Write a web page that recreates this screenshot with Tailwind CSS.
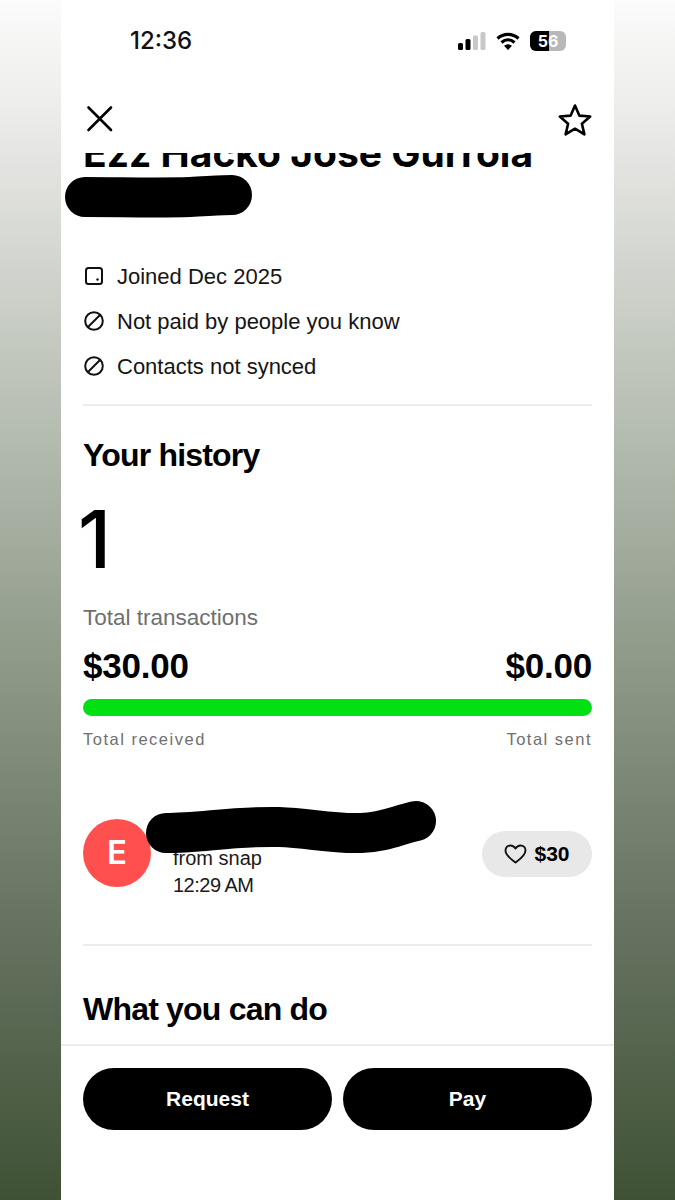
<!DOCTYPE html>
<html>
<head>
  <meta charset="UTF-8" />
  <script src="https://cdn.jsdelivr.net/npm/@tailwindcss/browser@4"></script>
  <title>Profile</title>
</head>
<body class="h-[1200px] w-[675px] overflow-hidden bg-[linear-gradient(to_bottom,#fbfbfb_0px,#eeeeec_100px,#d8dad5_230px,#b0b8ab_459px,#8a9583_689px,#677462_918px,#3f5235_1200px)] font-['Liberation_Sans',sans-serif] text-black">
  <div class="relative ml-[61px] flex h-[1200px] w-[553px] flex-col bg-white">
    <!-- status bar -->
    <div class="flex h-[100px] shrink-0 justify-between pl-[69px] pr-[48px] pt-[26px] font-['Inter',sans-serif]">
      <span class="text-[24px] font-medium leading-[30px] text-[#111]">12:36</span>
      <div class="flex h-[30px] items-center gap-[10px]">
        <svg width="28" height="18" viewBox="0 0 28 18">
          <rect x="0" y="11" width="5" height="7" rx="1.5" fill="#000"/>
          <rect x="7.5" y="7" width="5" height="11" rx="1.5" fill="#000"/>
          <rect x="15" y="3.5" width="5" height="14.5" rx="1.5" fill="#c8c8c8"/>
          <rect x="22.5" y="0" width="5" height="18" rx="1.5" fill="#c8c8c8"/>
        </svg>
        <svg width="24" height="18" viewBox="0 0 24 18" fill="none" stroke="#000" stroke-width="3.2">
          <path d="M1.5 6.5C7.5 1 16.5 1 22.5 6.5"/>
          <path d="M5.5 10.5C9.5 7 14.5 7 18.5 10.5"/>
          <path d="M12 18L8 13.8C10.5 11.8 13.5 11.8 16 13.8Z" fill="#000" stroke="none"/>
        </svg>
        <div class="relative flex h-[20px] w-[36px] overflow-hidden rounded-[6px] bg-[#b8b8b8]">
          <div class="h-full w-[19px] bg-black"></div>
          <span class="absolute inset-0 text-center text-[16px] font-bold leading-[20px] text-white">56</span>
        </div>
      </div>
    </div>

    <!-- top nav -->
    <div class="flex h-[53px] shrink-0 items-start justify-between pl-[23px] pr-[21px]">
      <svg class="mt-[3px]" width="32" height="32" viewBox="0 0 32 32" fill="none" stroke="#000" stroke-width="2.6" stroke-linecap="round">
        <path d="M4.5 4.5L27 27M27 4.5L4.5 27"/>
      </svg>
      <svg class="mt-[2px]" width="36" height="36" viewBox="0 0 36 36" fill="none" stroke="#000" stroke-width="2.6" stroke-linejoin="round">
        <path d="M18 3.5L22.3 13.6L33.2 14.5L24.9 21.7L27.4 32.4L18 26.7L8.6 32.4L11.1 21.7L2.8 14.5L13.7 13.6Z"/>
      </svg>
    </div>

    <!-- scroll area -->
    <div class="h-[891px] overflow-hidden px-[22px]">
      <h1 class="-mt-[24px] h-[47px] whitespace-nowrap font-['Inter',sans-serif] text-[39px] font-bold leading-[47px]">Ezz Hacko Jose Gurrola</h1>

      <div class="mt-[89px] flex flex-col gap-[22px] border-b-2 border-[#ececec] pb-[26px] text-[22px] leading-[23px] text-[#151515]">
        <div class="flex items-center gap-[13px] pl-[1px]">
          <svg class="-mt-[2px]" width="20" height="20" viewBox="0 0 20 20" fill="none" stroke="#111" stroke-width="2"><rect x="2" y="2" width="16" height="16" rx="2.5"/><circle cx="13.5" cy="13.5" r="1.2" fill="#111" stroke="none"/></svg>
          <span>Joined Dec 2025</span>
        </div>
        <div class="flex items-center gap-[13px] pl-[1px]">
          <svg class="-mt-[2px]" width="20" height="20" viewBox="0 0 20 20" fill="none" stroke="#111" stroke-width="2"><circle cx="10" cy="10" r="8.8"/><path d="M16 4L4 16"/></svg>
          <span>Not paid by people you know</span>
        </div>
        <div class="flex items-center gap-[13px] pl-[1px]">
          <svg class="-mt-[2px]" width="20" height="20" viewBox="0 0 20 20" fill="none" stroke="#111" stroke-width="2"><circle cx="10" cy="10" r="8.8"/><path d="M16 4L4 16"/></svg>
          <span>Contacts not synced</span>
        </div>
      </div>

      <h2 class="mt-[28px] text-[32px] font-bold leading-[42px] tracking-[-0.8px]">Your history</h2>
      <div class="-ml-[5px] mt-[21px] font-['Inter',sans-serif] text-[80px] font-medium leading-[84px]">1</div>
      <div class="mt-[23px] text-[22.5px] leading-[28px] text-[#6f6f6f]">Total transactions</div>

      <div class="mt-[14px] flex justify-between text-[35px] font-bold leading-[40px] tracking-[-0.2px]">
        <span>$30.00</span>
        <span>$0.00</span>
      </div>
      <div class="mt-[13px] h-[17px] rounded-full bg-[#00e013]"></div>
      <div class="mt-[13px] flex justify-between text-[16.5px] leading-[20px] tracking-[1.5px] text-[#6f6f6f]">
        <span>Total received</span>
        <span>Total sent</span>
      </div>

      <!-- transaction row -->
      <div class="mt-[50px] flex items-start border-b-2 border-[#ececec] pb-[45px]">
        <div class="mt-[20px] flex h-[68px] w-[68px] shrink-0 items-center justify-center rounded-full bg-[#ff4f4f] font-['Inter',sans-serif] text-[33px] font-semibold text-white">E</div>
        <div class="ml-[22px] flex-1 pt-[46px] text-[20px] leading-[27px] text-[#1a1a1a]">
          <div>from snap</div>
          <div class="tracking-[-0.5px]">12:29 AM</div>
        </div>
        <div class="mt-[32px] flex h-[46px] w-[110px] items-center justify-center gap-[7px] rounded-full bg-[#e8e8e8]">
          <svg width="23" height="20" viewBox="0 0 24 21" fill="none" stroke="#111" stroke-width="2"><path d="M12 19.5C8 16.5 1.5 12 1.5 6.8C1.5 3.5 4 1.5 6.7 1.5C9 1.5 10.8 2.7 12 4.8C13.2 2.7 15 1.5 17.3 1.5C20 1.5 22.5 3.5 22.5 6.8C22.5 12 16 16.5 12 19.5Z" stroke-linejoin="round"/></svg>
          <span class="text-[21px] font-bold">$30</span>
        </div>
      </div>

      <h2 class="mt-[41px] text-[32px] font-bold leading-[44px] tracking-[-0.8px]">What you can do</h2>
    </div>

    <!-- bottom buttons -->
    <div class="flex flex-1 gap-[11px] border-t-2 border-[#ececec] px-[22px] pt-[22px]">
      <button class="h-[62px] flex-1 rounded-[31px] bg-black text-[21px] font-bold text-white">Request</button>
      <button class="h-[62px] flex-1 rounded-[31px] bg-black text-[21px] font-bold text-white">Pay</button>
    </div>

    <!-- marker scribbles over the name -->
    <svg class="pointer-events-none absolute left-[-1px] top-0" width="555" height="900" viewBox="0 0 555 900" fill="none" stroke="#000" stroke-linecap="round" stroke-linejoin="round">
      <path d="M25 197C60 197 100 198 130 197C150 196 165 195 172 195" stroke-width="40"/>
      <path d="M106 833C140 833 175 826 219 827C250 828 270 834 301 833C325 832 335 826 356 821" stroke-width="40"/>
    </svg>
  </div>
</body>
</html>
